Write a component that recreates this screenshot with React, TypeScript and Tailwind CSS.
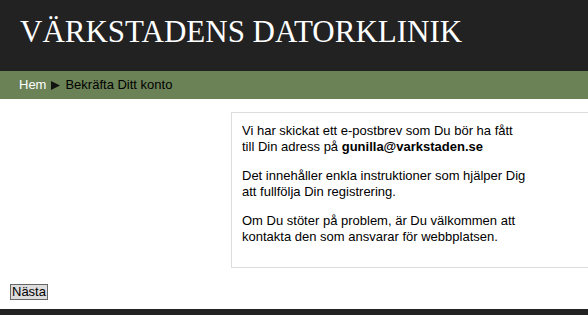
import React from "react";

const App: React.FC = () => {
  return (
    <div className="w-[588px] h-[315px] bg-white flex flex-col overflow-hidden font-['Liberation_Sans',Arial,sans-serif]">
      {/* Header */}
      <div className="h-[71px] bg-[#222222] flex items-start pl-[20px] pt-[14px] shrink-0">
        <h1 className="text-[31px] leading-[36px] text-white font-['Liberation_Serif','Times_New_Roman',serif]">
          VÄRKSTADENS DATORKLINIK
        </h1>
      </div>

      {/* Breadcrumb */}
      <div className="h-[28px] bg-[#6b8257] flex items-center pl-[19px] text-[13px] shrink-0">
        <span className="text-white">Hem</span>
        <svg width="9" height="9" viewBox="0 0 9 9" className="mx-[5px]">
          <path d="M0 0 L9 4.5 L0 9 Z" fill="#111111" />
        </svg>
        <span className="text-black">Bekräfta Ditt konto</span>
      </div>

      {/* Content */}
      <div className="flex-1 flex flex-col">
        <div className="flex pt-[13px]">
          <div className="w-[231px] shrink-0" />
          <div className="flex-1 border border-[#dddddd] border-r-0 h-[156px] pl-[10px] pt-[10px] text-[13px] leading-[16px] text-black">
            <p>
              Vi har skickat ett e-postbrev som Du bör ha fått
              <br />
              till Din adress på <b>gunilla@varkstaden.se</b>
            </p>
            <p className="mt-[13px]">
              Det innehåller enkla instruktioner som hjälper Dig
              <br />
              att fullfölja Din registrering.
            </p>
            <p className="mt-[13px]">
              Om Du stöter på problem, är Du välkommen att
              <br />
              kontakta den som ansvarar för webbplatsen.
            </p>
          </div>
        </div>
        <div className="pl-[10px] pt-[11px]">
          <button className="h-[16px] px-[1px] border border-[#666666] bg-[#dddddd] text-[13px] leading-[14px] text-black">
            Nästa
          </button>
        </div>
      </div>

      {/* Footer */}
      <div className="h-[6px] bg-[#222222] shrink-0" />
    </div>
  );
};

export default App;
